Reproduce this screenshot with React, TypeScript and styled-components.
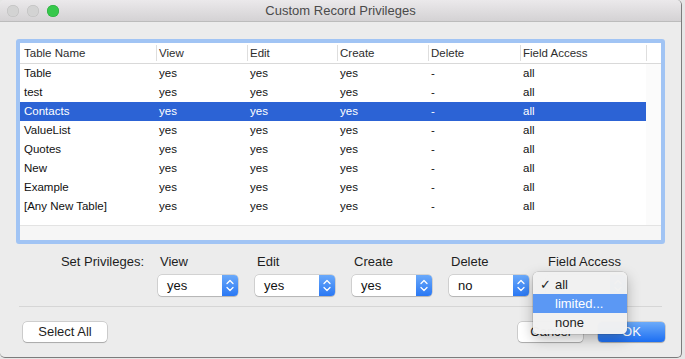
import React from 'react';
import styled, { createGlobalStyle } from 'styled-components';

const GlobalStyle = createGlobalStyle`
  html, body { margin: 0; padding: 0; background: #e6e6e6; }
  body { font-family: "Liberation Sans", Arial, sans-serif; }
  * { box-sizing: border-box; }
`;

const Window = styled.div`
  width: 682px;
  height: 358px;
  background: #ececec;
  border-right: 1px solid #7c7c7c;
  border-bottom: 1px solid #7c7c7c;
  border-radius: 5px 5px 5px 5px;
  display: flex;
  flex-direction: column;
`;

const TitleBar = styled.div`
  height: 22px;
  flex: none;
  display: grid;
  grid-template-columns: 1fr auto 1fr;
  align-items: center;
  background: linear-gradient(#ebe9eb, #d4d2d4);
  border-bottom: 1px solid #bcbcbc;
  border-radius: 5px 5px 0 0;
`;

const Lights = styled.div`
  display: flex;
  gap: 8px;
  padding-left: 7px;
`;

const Light = styled.span<{ $color: string; $edge: string }>`
  width: 12px;
  height: 12px;
  border-radius: 50%;
  background: ${(p) => p.$color};
  box-shadow: inset 0 0 0 0.5px ${(p) => p.$edge};
`;

const Title = styled.div`
  font-size: 13px;
  color: #4a4a4a;
  line-height: 16px;
  padding-top: 1px;
`;

const Content = styled.div`
  flex: 1;
  display: flex;
  flex-direction: column;
  padding: 17px 16px 15px 16px;
`;

const TableFrame = styled.div`
  height: 205px;
  border: 4px solid #a1c4f4;
  border-radius: 3px;
  background: #fff;
  display: flex;
  flex-direction: column;
  overflow: hidden;
`;

const COLS = '136px 91px 90px 91px 92px 126px';

const HeaderRow = styled.div`
  display: grid;
  grid-template-columns: ${COLS} 15px;
  height: 21px;
  border-bottom: 1px solid #d9d9d9;
`;

const HeaderCell = styled.div<{ $divider?: boolean }>`
  position: relative;
  font-size: 11.5px;
  line-height: 20px;
  color: #2d2d2d;
  padding-left: ${(p) => (p.$divider ? 3 : 4)}px;
  white-space: nowrap;
  &::before {
    content: '';
    display: ${(p) => (p.$divider ? 'block' : 'none')};
    position: absolute;
    left: 0;
    top: 2px;
    bottom: 2px;
    width: 1px;
    background: #dedede;
  }
`;

const Body = styled.div`
  flex: 1;
  display: flex;
`;

const Rows = styled.div`
  width: 626px;
  display: flex;
  flex-direction: column;
`;

const Gutter = styled.div`
  flex: 1;
  background: #fbfbfb;
`;

const Row = styled.div<{ $selected?: boolean }>`
  display: grid;
  grid-template-columns: ${COLS};
  height: 19px;
  background: ${(p) => (p.$selected ? '#2c63d5' : 'transparent')};
  color: ${(p) => (p.$selected ? '#fff' : '#111')};
`;

const Cell = styled.div<{ $first?: boolean }>`
  font-size: 11.5px;
  line-height: 19px;
  padding-left: ${(p) => (p.$first ? 4 : 3)}px;
  white-space: nowrap;
`;

const HScroll = styled.div`
  height: 15px;
  flex: none;
  background: #f6f6f6;
  border-top: 1px solid #e3e3e3;
`;

const PrivRow = styled.div`
  display: flex;
  align-items: flex-start;
  margin-top: 10px;
`;

const PrivLabel = styled.div`
  width: 128px;
  margin-right: 14px;
  text-align: right;
  font-size: 13px;
  line-height: 16px;
  color: #1e1e1e;
`;

const Groups = styled.div`
  display: flex;
  gap: 17px;
`;

const Group = styled.div`
  position: relative;
  width: 80px;
  display: flex;
  flex-direction: column;
`;

const GroupLabel = styled.div`
  margin-left: 2px;
  font-size: 13px;
  line-height: 16px;
  color: #1e1e1e;
  white-space: nowrap;
`;

const SelectBox = styled.div`
  margin-top: 5px;
  height: 21px;
  display: flex;
  background: #fff;
  border-radius: 4px;
  box-shadow: 0 0 0 0.5px rgba(0, 0, 0, 0.22), 0 1px 1px rgba(0, 0, 0, 0.14);
`;

const SelectText = styled.div`
  flex: 1;
  padding-left: 9px;
  font-size: 13px;
  line-height: 21px;
  color: #111;
`;

const Stepper = styled.div`
  width: 16px;
  border-radius: 0 4px 4px 0;
  background: linear-gradient(#6aa9fa, #2a78f4);
  display: flex;
  align-items: center;
  justify-content: center;
`;

const Menu = styled.div`
  position: absolute;
  left: -13px;
  top: 18px;
  width: 94px;
  z-index: 10;
  padding: 3px 0 2px;
  background: rgba(241, 241, 241, 0.98);
  border-radius: 5px;
  box-shadow: 0 0 0 0.5px rgba(0, 0, 0, 0.2), 0 5px 14px rgba(0, 0, 0, 0.28);
`;

const MenuItem = styled.div<{ $active?: boolean }>`
  display: flex;
  height: 19px;
  align-items: center;
  padding-left: 7px;
  font-size: 13px;
  color: ${(p) => (p.$active ? '#fff' : '#1e1e1e')};
  background: ${(p) => (p.$active ? '#5b98f4' : 'transparent')};
`;

const Check = styled.span`
  width: 15px;
  font-family: "DejaVu Sans", sans-serif;
  font-size: 13px;
  font-weight: bold;
`;

const Divider = styled.div`
  height: 1px;
  background: #d6d6d6;
  margin: 10px 3px 0;
`;

const ButtonRow = styled.div`
  display: flex;
  align-items: center;
  margin-top: 15px;
  padding-left: 7px;
`;

const Spacer = styled.div`
  flex: 1;
`;

const Button = styled.button<{ $width: number; $primary?: boolean }>`
  width: ${(p) => p.$width}px;
  height: 20px;
  padding: 0;
  border: none;
  border-radius: 4px;
  font-family: "Liberation Sans", Arial, sans-serif;
  font-size: 13px;
  line-height: 20px;
  color: ${(p) => (p.$primary ? '#fff' : '#1e1e1e')};
  background: ${(p) => (p.$primary ? 'linear-gradient(#6cabfa, #1c6ef2)' : '#fff')};
  box-shadow: 0 0 0 0.5px rgba(0, 0, 0, 0.25), 0 1px 1px rgba(0, 0, 0, 0.18);
`;

const ButtonGap = styled.div`
  width: 15px;
`;

const Chevrons = () => (
  <svg width="16" height="21" viewBox="0 0 16 21">
    <path d="M5 8.5 L8 5.5 L11 8.5" stroke="#fff" strokeWidth="1.3" fill="none" strokeLinecap="round" strokeLinejoin="round" />
    <path d="M5 12.5 L8 15.5 L11 12.5" stroke="#fff" strokeWidth="1.3" fill="none" strokeLinecap="round" strokeLinejoin="round" />
  </svg>
);

const Select = ({ value }: { value: string }) => (
  <SelectBox>
    <SelectText>{value}</SelectText>
    <Stepper>
      <Chevrons />
    </Stepper>
  </SelectBox>
);

const headers = ['Table Name', 'View', 'Edit', 'Create', 'Delete', 'Field Access'];
const tables = ['Table', 'test', 'Contacts', 'ValueList', 'Quotes', 'New', 'Example', '[Any New Table]'];

export default function App() {
  return (
    <>
      <GlobalStyle />
      <Window>
        <TitleBar>
          <Lights>
            <Light $color="#d3d3d3" $edge="#bcbcbc" />
            <Light $color="#d3d3d3" $edge="#bcbcbc" />
            <Light $color="#36c84b" $edge="#27a73a" />
          </Lights>
          <Title>Custom Record Privileges</Title>
          <div />
        </TitleBar>
        <Content>
          <TableFrame>
            <HeaderRow>
              {headers.map((h, i) => (
                <HeaderCell key={h} $divider={i > 0}>
                  {h}
                </HeaderCell>
              ))}
              <HeaderCell $divider />
            </HeaderRow>
            <Body>
              <Rows>
                {tables.map((t) => (
                  <Row key={t} $selected={t === 'Contacts'}>
                    <Cell $first>{t}</Cell>
                    <Cell>yes</Cell>
                    <Cell>yes</Cell>
                    <Cell>yes</Cell>
                    <Cell>-</Cell>
                    <Cell>all</Cell>
                  </Row>
                ))}
              </Rows>
              <Gutter />
            </Body>
            <HScroll />
          </TableFrame>
          <PrivRow>
            <PrivLabel>Set Privileges:</PrivLabel>
            <Groups>
              <Group>
                <GroupLabel>View</GroupLabel>
                <Select value="yes" />
              </Group>
              <Group>
                <GroupLabel>Edit</GroupLabel>
                <Select value="yes" />
              </Group>
              <Group>
                <GroupLabel>Create</GroupLabel>
                <Select value="yes" />
              </Group>
              <Group>
                <GroupLabel>Delete</GroupLabel>
                <Select value="no" />
              </Group>
              <Group>
                <GroupLabel>Field Access</GroupLabel>
                <Select value="all" />
                <Menu>
                  <MenuItem>
                    <Check>✓</Check>all
                  </MenuItem>
                  <MenuItem $active>
                    <Check />limited...
                  </MenuItem>
                  <MenuItem>
                    <Check />none
                  </MenuItem>
                </Menu>
              </Group>
            </Groups>
          </PrivRow>
          <Divider />
          <ButtonRow>
            <Button $width={84}>Select All</Button>
            <Spacer />
            <Button $width={65}>Cancel</Button>
            <ButtonGap />
            <Button $width={67} $primary>
              OK
            </Button>
          </ButtonRow>
        </Content>
      </Window>
    </>
  );
}
